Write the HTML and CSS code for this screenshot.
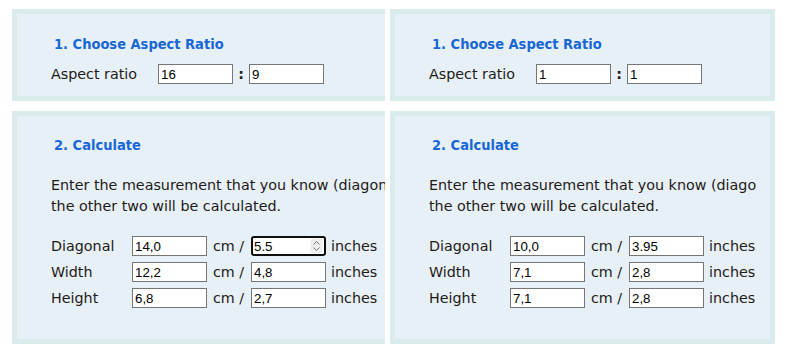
FILE: index.html
```html
<!DOCTYPE html>
<html lang="en">
<head>
	<meta charset="UTF-8">
	<title>Aspect ratio calculator</title>
	<link rel="stylesheet" href="styles.css">
</head>
<body>
	<div class="page">
		<div class="col col-left">
			<section class="panel panel-ratio">
				<h2>1. Choose Aspect Ratio</h2>
				<div class="ratio-row">
					<label class="ratio-label">Aspect ratio</label>
					<input type="text" class="field" value="16">
					<span class="colon">:</span>
					<input type="text" class="field" value="9">
				</div>
			</section>
			<section class="panel panel-calc">
				<h2>2. Calculate</h2>
				<p class="intro">Enter the measurement that you know (diagonal, width or height) and<br>the other two will be calculated.</p>
				<div class="calc-rows">
					<div class="calc-row">
						<label class="calc-label">Diagonal</label>
						<input type="text" class="field" value="14,0">
						<span class="unit">cm /</span>
						<span class="spin-wrap">
							<input type="text" class="field field-focus" value="5.5">
							<svg class="spinner" width="13" height="16" viewBox="0 0 13 16">
								<rect x="0.5" y="0.5" width="12" height="15" rx="2" fill="#efefef"/>
								<path d="M3.5 6.5 L6.5 3.5 L9.5 6.5" fill="none" stroke="#777" stroke-width="1"/>
								<path d="M3.5 9.5 L6.5 12.5 L9.5 9.5" fill="none" stroke="#777" stroke-width="1"/>
							</svg>
						</span>
						<span class="unit-in">inches</span>
					</div>
					<div class="calc-row">
						<label class="calc-label">Width</label>
						<input type="text" class="field" value="12,2">
						<span class="unit">cm /</span>
						<input type="text" class="field" value="4,8">
						<span class="unit-in">inches</span>
					</div>
					<div class="calc-row">
						<label class="calc-label">Height</label>
						<input type="text" class="field" value="6,8">
						<span class="unit">cm /</span>
						<input type="text" class="field" value="2,7">
						<span class="unit-in">inches</span>
					</div>
				</div>
			</section>
		</div>
		<div class="col col-right">
			<section class="panel panel-ratio">
				<h2>1. Choose Aspect Ratio</h2>
				<div class="ratio-row">
					<label class="ratio-label">Aspect ratio</label>
					<input type="text" class="field" value="1">
					<span class="colon">:</span>
					<input type="text" class="field" value="1">
				</div>
			</section>
			<section class="panel panel-calc">
				<h2>2. Calculate</h2>
				<p class="intro">Enter the measurement that you know (diagonal, width or height) and<br>the other two will be calculated.</p>
				<div class="calc-rows">
					<div class="calc-row">
						<label class="calc-label">Diagonal</label>
						<input type="text" class="field" value="10,0">
						<span class="unit">cm /</span>
						<input type="text" class="field" value="3.95">
						<span class="unit-in">inches</span>
					</div>
					<div class="calc-row">
						<label class="calc-label">Width</label>
						<input type="text" class="field" value="7,1">
						<span class="unit">cm /</span>
						<input type="text" class="field" value="2,8">
						<span class="unit-in">inches</span>
					</div>
					<div class="calc-row">
						<label class="calc-label">Height</label>
						<input type="text" class="field" value="7,1">
						<span class="unit">cm /</span>
						<input type="text" class="field" value="2,8">
						<span class="unit-in">inches</span>
					</div>
				</div>
			</section>
		</div>
	</div>
</body>
</html>
```

FILE: styles.css
```css
* {
	margin: 0;
	padding: 0;
	box-sizing: border-box;
}
body {
	background: #fff;
	font-family: "DejaVu Sans", sans-serif;
	font-size: 14.3px;
	color: #1e1a18;
}
.page {
	display: flex;
	gap: 5px;
	padding: 9px 0 0 12px;
}
.col {
	display: flex;
	flex-direction: column;
	gap: 10px;
	flex: none;
}
.col-left {
	width: 373px;
	overflow: hidden;
}
.col-right {
	width: 385px;
}
.panel {
	width: 385px;
	flex: none;
	background: #e7f0f6;
	border: 5px solid #daebeb;
	padding: 0 0 0 34px;
}
.panel-ratio {
	height: 92px;
}
.panel-calc {
	height: 233px;
}
h2 {
	font-family: "DejaVu Sans Condensed", "DejaVu Sans", sans-serif;
	font-size: 14.5px;
	font-weight: bold;
	color: #1767d6;
	line-height: 20px;
	padding-left: 3px;
}
.panel-ratio h2 {
	margin-top: 20px;
}
.panel-calc h2 {
	margin-top: 19px;
}
.field {
	width: 75px;
	height: 20px;
	border: 1px solid #767676;
	background: #fff;
	font-family: "Liberation Sans", Arial, sans-serif;
	font-size: 13.3px;
	color: #000;
	padding: 0 2px;
	outline: none;
}
.ratio-row {
	display: flex;
	align-items: center;
	margin-top: 10px;
	height: 20px;
}
.ratio-label {
	width: 107px;
}
.colon {
	width: 16px;
	text-align: center;
	font-weight: bold;
}
.intro {
	margin-top: 20px;
	line-height: 21px;
	white-space: nowrap;
	overflow: hidden;
	width: 328px;
}
.col-left .intro {
	width: 340px;
}
.calc-rows {
	display: flex;
	flex-direction: column;
	gap: 6px;
	margin-top: 19px;
}
.calc-row {
	display: flex;
	align-items: center;
	height: 20px;
}
.calc-label {
	width: 81px;
}
.unit {
	width: 44px;
	padding-left: 6px;
}
.unit-in {
	padding-left: 5px;
}
.spin-wrap {
	position: relative;
	display: flex;
}
.field-focus {
	border: 2px solid #101010;
	border-radius: 3px;
	padding-left: 1px;
}
.spinner {
	position: absolute;
	right: 3px;
	top: 2px;
}
```
